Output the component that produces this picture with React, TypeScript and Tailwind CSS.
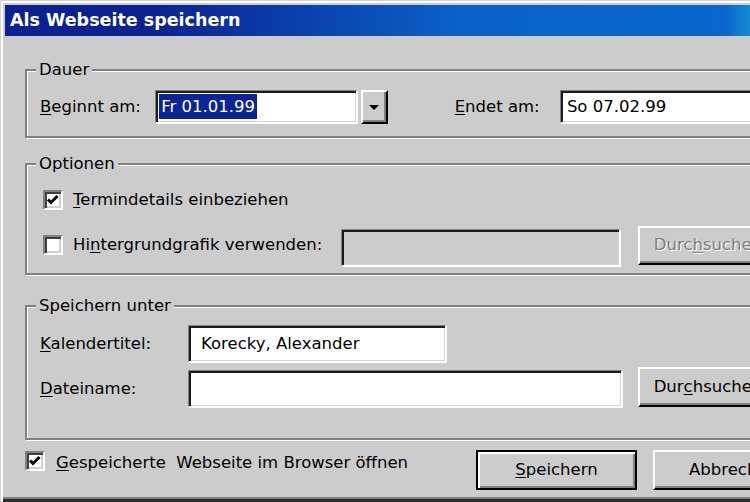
import type { ReactNode } from 'react';

const sunken =
  'border-t border-l border-b-2 border-r-2 border-t-[#808080] border-l-[#808080] border-b-white border-r-white shadow-[inset_2px_2px_0_#1c1c1c,inset_-1px_-1px_0_#d6d6d6]';
const raised =
  'border-t-2 border-l-2 border-b-2 border-r-2 border-t-white border-l-white border-b-black border-r-black shadow-[inset_-2px_-2px_0_#808080]';

function Key({ children }: { children: ReactNode }) {
  return <span className="underline underline-offset-2">{children}</span>;
}

function Group({ title, className = '', children }: { title: string; className?: string; children: ReactNode }) {
  return (
    <div className={`border-2 border-[#808080] shadow-[inset_1px_1px_0_#fff,1px_1px_0_#fff] ${className}`}>
      <div className="-mt-[11px] ml-[9px] w-fit px-[3px] bg-[#cccccc] leading-[20px]">{title}</div>
      {children}
    </div>
  );
}

function CheckBox({ checked = false, className = '' }: { checked?: boolean; className?: string }) {
  return (
    <span
      className={`flex w-[20px] h-[20px] shrink-0 bg-white border-2 border-t-[#808080] border-l-[#808080] border-b-white border-r-white shadow-[inset_2px_2px_0_#404040,inset_-2px_-2px_0_#d4d0c8] ${className}`}
    >
      {checked && (
        <svg viewBox="0 0 16 16" className="w-full h-full">
          <polyline points="3,7.5 6,10.5 12.5,4" fill="none" stroke="#000" strokeWidth="3" strokeLinejoin="miter" />
        </svg>
      )}
    </span>
  );
}

function Button({ children, disabled = false, isDefault = false, className = '' }: {
  children: ReactNode; disabled?: boolean; isDefault?: boolean; className?: string;
}) {
  const frame = isDefault
    ? 'border-2 border-black shadow-[inset_2px_2px_0_#fff,inset_-2px_-2px_0_#808080]'
    : raised;
  return (
    <div
      className={`flex items-center justify-center shrink-0 bg-[#cccccc] leading-[20px] ${frame} ${
        disabled ? 'text-[#808080] [text-shadow:1px_1px_0_#fff]' : 'text-black'
      } ${className}`}
    >
      {children}
    </div>
  );
}

export default function App() {
  return (
    <div className="w-[750px] h-[502px] overflow-hidden bg-[#cccccc] font-['DejaVu_Sans',sans-serif] text-[16.5px] text-black shadow-[inset_1px_1px_0_#d4d4d4,inset_3px_3px_0_#ffffff,inset_0_-3px_0_#2a2a2a,inset_0_-5px_0_#808080]">
      <div className="w-[820px] pl-[5px] pt-[5px]">
        <div className="h-[31px] flex items-center pl-[5px] bg-[linear-gradient(to_right,#0b2191_0px,#0b2191_145px,#0a62c8_460px,#0a66cc_720px,#1cb0d8_770px)]">
          <span className="text-white font-bold text-[17.5px]">Als Webseite speichern</span>
        </div>

        <div className="pl-[20px]">
          <Group title="Dauer" className="mt-[33px]">
            <div className="mt-[10px] mb-[12px] pl-[13px] flex items-center h-[34px] leading-[20px]">
              <span className="w-[116px]"><Key>B</Key>eginnt am:</span>
              <div className={`w-[204px] h-[34px] bg-white flex items-center pl-[3px] ${sunken}`}>
                <span className="bg-[#0b2494] text-white px-[2px] leading-[25px]">Fr 01.01.99</span>
              </div>
              <Button className="ml-[3px] w-[27px] h-[34px]">
                <svg width="10" height="5" viewBox="0 0 10 5"><polygon points="0,0 10,0 5,5" fill="#000" /></svg>
              </Button>
              <span className="ml-[67px] w-[106px]"><Key>E</Key>ndet am:</span>
              <div className={`w-[260px] h-[34px] bg-white flex items-center pl-[6px] ${sunken}`}>So 07.02.99</div>
            </div>
          </Group>

          <Group title="Optionen" className="mt-[25px]">
            <div className="mt-[15px] pl-[16px] flex items-center h-[22px] leading-[20px]">
              <CheckBox checked />
              <span className="ml-[10px]"><Key>T</Key>ermindetails einbeziehen</span>
            </div>
            <div className="mt-[18px] mb-[6px] pl-[16px] flex items-center h-[38px] leading-[20px]">
              <CheckBox className="mb-[6px]" />
              <span className="ml-[10px] w-[268px] mb-[6px]">Hi<Key>n</Key>tergrundgrafik verwenden:</span>
              <div className={`w-[280px] h-[38px] bg-[#cccccc] ${sunken}`} />
              <Button disabled className="ml-[17px] w-[140px] h-[39px] mb-[6px]">Durc<Key>h</Key>suchen</Button>
            </div>
          </Group>

          <Group title="Speichern unter" className="mt-[30px]">
            <div className="mt-[9px] pl-[13px] flex items-center h-[38px] leading-[20px]">
              <span className="w-[148px]"><Key>K</Key>alendertitel:</span>
              <div className={`w-[259px] h-[38px] bg-white flex items-center pl-[12px] ${sunken}`}>Korecky, Alexander</div>
            </div>
            <div className="mt-[7px] mb-[30px] pl-[13px] flex items-center h-[38px] leading-[20px]">
              <span className="w-[148px]"><Key>D</Key>ateiname:</span>
              <div className={`w-[435px] h-[38px] bg-white ${sunken}`} />
              <Button className="ml-[15px] w-[140px] h-[40px] mb-[4px]">Dur<Key>c</Key>hsuchen</Button>
            </div>
          </Group>

          <div className="mt-[10px] flex items-start leading-[20px]">
            <CheckBox checked className="mt-[1px]" />
            <span className="ml-[11px] mt-[3px] w-[420px] whitespace-pre"><Key>G</Key>espeicherte  Webseite im Browser öffnen</span>
            <Button isDefault className="w-[161px] h-[40px]"><Key>S</Key>peichern</Button>
            <Button className="ml-[16px] w-[161px] h-[40px]">Abbrechen</Button>
          </div>
        </div>
      </div>
    </div>
  );
}
